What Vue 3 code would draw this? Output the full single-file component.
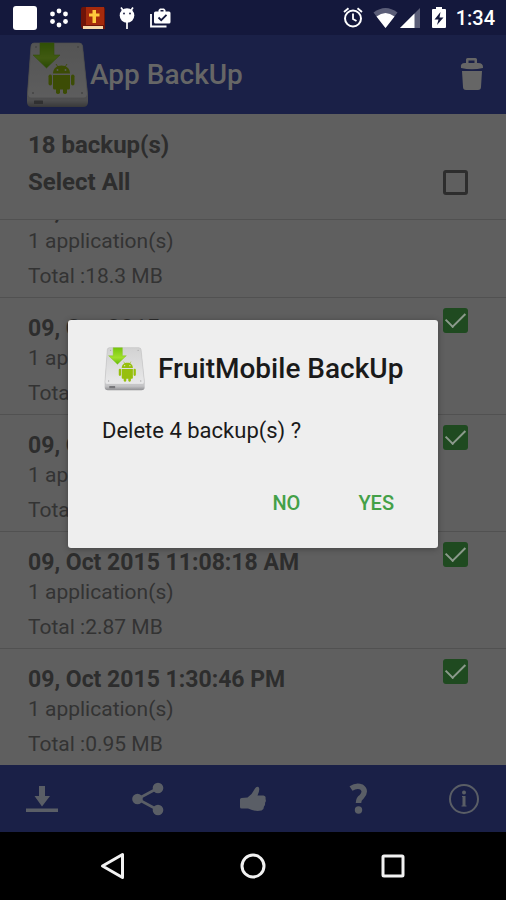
<script setup>
import { ref, computed } from 'vue'

const backups = ref([
  { id: 1, date: '09, Oct 2015', size: '18.3 MB', checked: true },
  { id: 2, date: '09, Oct 2015', size: '4.12 MB', checked: true },
  { id: 3, date: '09, Oct 2015', size: '3.05 MB', checked: true },
  { id: 4, date: '09, Oct 2015 11:08:18 AM', size: '2.87 MB', checked: true },
  { id: 5, date: '09, Oct 2015 1:30:46 PM', size: '0.95 MB', checked: true }
])
const selectAll = ref(false)
const total = 18
const selected = computed(() => backups.value.slice(1).filter((b) => b.checked).length)
</script>

<template>
  <div class="screen">
    <svg class="defs" width="0" height="0" aria-hidden="true">
      <defs>
        <linearGradient id="plate" x1="0" y1="0" x2="0" y2="1">
          <stop offset="0" stop-color="#d2d2d2" />
          <stop offset="1" stop-color="#e9e9ea" />
        </linearGradient>
        <linearGradient id="front" x1="0" y1="0" x2="0" y2="1">
          <stop offset="0" stop-color="#d5d5d6" />
          <stop offset="0.9" stop-color="#c4c4c6" />
          <stop offset="1" stop-color="#8d8d90" />
        </linearGradient>
        <linearGradient id="arrow" x1="0" y1="0" x2="0" y2="1">
          <stop offset="0" stop-color="#76c60c" />
          <stop offset="0.6" stop-color="#a1e02c" />
          <stop offset="1" stop-color="#63b808" />
        </linearGradient>
        <symbol id="drive" viewBox="0 0 64 66" preserveAspectRatio="none">
          <path d="M8 1H53Q56 1 56.500 4L62 54V60Q62 65 57 65H6Q1 65 1 60V55L5 4Q5.500 1 8 1Z" fill="url(#front)" />
          <path d="M8 1H53Q56 1 56.500 4L61.500 52Q61.500 56 58 56H5Q1.500 56 1.500 52L5 4Q5.500 1 8 1Z" fill="url(#plate)" stroke="#bcbcbc" stroke-width="0.700" />
          <g fill="#aaa"><circle cx="10" cy="5" r="1" /><circle cx="52" cy="5" r="1" /><circle cx="7" cy="51" r="1" /><circle cx="56" cy="51" r="1" /></g>
          <rect x="8" y="58.500" width="9" height="3.500" rx="0.500" fill="#77777a" />
          <path d="M14 1H28V13H34L20.500 26 7 13H14Z" fill="url(#arrow)" stroke="#7fc51c" stroke-width="0.600" />
          <g fill="#97bf0d">
            <path d="M27 31.500C27 26.500 30.500 23.500 35.500 23.500S44 26.500 44 31.500Z" />
            <path d="M27 33H44V46Q44 47.500 42.500 47.500H28.500Q27 47.500 27 46Z" />
            <rect x="22.500" y="32.500" width="3.500" height="11" rx="1.700" />
            <rect x="45" y="32.500" width="3.500" height="11" rx="1.700" />
            <rect x="30" y="44" width="4" height="8" rx="1.700" />
            <rect x="37" y="44" width="4" height="8" rx="1.700" />
            <path d="M30 22L32 25M41 22L39 25" stroke="#97bf0d" stroke-width="0.900" />
          </g>
          <g fill="#e6e6e6"><circle cx="31.500" cy="28" r="0.900" /><circle cx="39.500" cy="28" r="0.900" /></g>
        </symbol>
      </defs>
    </svg>

    <header class="status">
      <div class="notices">
        <span class="blank"></span>
        <svg width="20" height="20" viewBox="0 0 20 20" fill="#fff"><circle cx="10" cy="3" r="2.400" /><circle cx="16.500" cy="6" r="2.400" /><circle cx="16.500" cy="13.500" r="2.400" /><circle cx="10" cy="17" r="2.400" /><circle cx="3.500" cy="13.500" r="2.400" /><circle cx="3.500" cy="6" r="2.400" /></svg>
        <svg width="24" height="24" viewBox="0 0 24 24"><path d="M2 1H22Q24 1 24 3V23H2Q0 22 0 20V3Q0 1 2 1Z" fill="#6f1408" /><path d="M5 1H23V19H5Z" fill="#a52a0c" /><path d="M2 20H22V23H2Z" fill="#f6d7a8" /><path d="M11.500 4H15V7.500H18.500V10.500H15V17H11.500V10.500H8V7.500H11.500Z" fill="#ffc83d" /></svg>
        <svg width="20" height="22" viewBox="0 0 20 22" fill="#fff"><path d="M4 0.500L6.500 4M16 0.500L13.500 4M10 14V22" stroke="#fff" stroke-width="1.700" /><circle cx="10" cy="8.500" r="7.300" /><g fill="#14183c"><circle cx="7" cy="6.500" r="0.900" /><circle cx="13" cy="6.500" r="0.900" /></g></svg>
        <svg width="22" height="20" viewBox="0 0 22 20"><path d="M2 6V18.500H17.500" fill="none" stroke="#fff" stroke-width="1.800" /><path d="M6.500 3.500H9.500V2L11 0.500H15L16.500 2V3.500H20Q21.500 3.500 21.500 5V14Q21.500 15.500 20 15.500H6.500Q5 15.500 5 14V5Q5 3.500 6.500 3.500ZM11.500 3.500H14.500V2H11.500Z" fill="#fff" /><path d="M9.500 9.500L12.200 12.200 17.500 6.800" fill="none" stroke="#14183c" stroke-width="1.800" /></svg>
      </div>
      <div class="system">
        <svg width="20" height="21" viewBox="0 0 20 21" fill="none" stroke="#fff" stroke-width="2"><circle cx="10" cy="11.500" r="8" /><path d="M1 5L5.500 1.200M19 5L14.500 1.200M10 6.500V12L13.500 14" stroke-width="1.800" /></svg>
        <svg class="wifi" width="25" height="20" viewBox="0 0 25 20"><path d="M0.500 4.500Q12.500-4.500 24.500 4.500L12.500 20Z" fill="#5b5e78" /><path d="M3.500 8.500Q12.500 1.500 21.500 8.500L12.500 20Z" fill="#fff" /></svg>
        <svg class="signal" width="20" height="20" viewBox="0 0 20 20"><path d="M0 20L20 0V20Z" fill="#5b5e78" /><path d="M0 20L14.500 5.500V20Z" fill="#fff" /></svg>
        <svg class="battery" width="14" height="21" viewBox="0 0 14 21"><path d="M4 0H10V2H13Q14 2 14 3V20Q14 21 13 21H1Q0 21 0 20V3Q0 2 1 2H4Z" fill="#fff" /><path d="M8.500 5L2.500 12.500H6.500L5 18 11.500 10.500H7.500Z" fill="#14183c" /></svg>
        <span class="clock">1:34</span>
      </div>
    </header>

    <div class="appbar">
      <svg class="logo" width="64" height="66"><use href="#drive" /></svg>
      <h1>App BackUp</h1>
      <button class="trash" aria-label="Delete">
        <svg width="24" height="34" viewBox="0 0 24 34" fill="#666"><path d="M6 6V1.500Q6 0 7.500 0H15.500Q17 0 17 1.500V6H14.500V2.500H8.500V6Z" /><path d="M1 10Q0 5 5 5H18Q23.500 5 23 10Q12 12.500 1 10Z" /><path d="M2 13H22L21 29Q21 32 18 32H6Q3 32 3 29Z" /></svg>
      </button>
    </div>

    <section class="summary">
      <p>{{ total }} backup(s)</p>
      <label class="all">Select All<input v-model="selectAll" type="checkbox" class="box" /></label>
    </section>

    <ul class="list">
      <li v-for="b in backups" :key="b.id" class="row">
        <div class="info">
          <label :for="'b' + b.id" class="date">{{ b.date }}</label>
          <p class="apps">1 application(s)</p>
          <p class="size">Total :{{ b.size }}</p>
        </div>
        <input :id="'b' + b.id" v-model="b.checked" type="checkbox" class="box" />
      </li>
    </ul>

    <footer class="tools">
      <button aria-label="Save"><svg width="34" height="34" viewBox="0 0 34 34" fill="currentColor"><path d="M14 4H20V14H25L17 24.500 9.500 14H14ZM1 26.500H33V30H1Z" /></svg></button>
      <button aria-label="Share"><svg width="34" height="34" viewBox="0 0 34 34" fill="currentColor"><path d="M27 6L6.500 17 27 28" fill="none" stroke="currentColor" stroke-width="2.600" /><circle cx="27" cy="6" r="5.300" /><circle cx="6.500" cy="17" r="5.300" /><circle cx="27" cy="28" r="5.300" /></svg></button>
      <button aria-label="Like"><svg width="34" height="34" viewBox="0 0 34 34" fill="currentColor"><path d="M4 17.500Q4 16 5.500 16L11.500 15.500Q16.500 12 19 6.500Q20.500 3.800 22.500 5Q24.500 7 21.500 13.500H27.500Q30.300 14 29.500 17Q30.500 19 29 21Q29.500 23 28 24.500Q28 27.500 25.500 28.500Q19 30 12 26.500H5.500Q4 26.500 4 25Z" /></svg></button>
      <button aria-label="Help"><svg width="34" height="34" viewBox="0 0 34 34" fill="currentColor"><path d="M9 6.500Q14.500 3 19.500 5Q25 9 19.500 15Q16.500 17 16.500 21" fill="none" stroke="currentColor" stroke-width="5.500" /><circle cx="16.500" cy="28" r="3.700" /></svg></button>
      <button aria-label="About"><svg width="34" height="34" viewBox="0 0 34 34" fill="currentColor"><circle cx="17" cy="17" r="14" fill="none" stroke="currentColor" stroke-width="2" /><circle cx="17" cy="10.500" r="2" /><path d="M15 14H18.500V23.500H19.500V24.500H14.500V23.500H15.500V15H15Z" /></svg></button>
    </footer>

    <nav class="nav">
      <button aria-label="Back"><svg width="28" height="28" viewBox="0 0 28 28"><path d="M23.500 2.500V25.500L3.500 14Z" /></svg></button>
      <button aria-label="Home"><svg width="28" height="28" viewBox="0 0 28 28"><circle cx="14" cy="14" r="11" /></svg></button>
      <button aria-label="Recent apps"><svg width="28" height="28" viewBox="0 0 28 28"><rect x="4" y="4" width="20" height="20" rx="1" /></svg></button>
    </nav>

    <div class="overlay">
      <div class="dialog" role="dialog" aria-labelledby="dialog-title">
        <div class="heading">
          <svg width="42" height="44"><use href="#drive" /></svg>
          <h2 id="dialog-title">FruitMobile BackUp</h2>
        </div>
        <p class="message">Delete {{ selected }} backup(s) ?</p>
        <div class="actions">
          <button>NO</button>
          <button>YES</button>
        </div>
      </div>
    </div>
  </div>
</template>

<style>
body {
  margin: 0;
  background: #000;
}
</style>

<style scoped>
* {
  box-sizing: border-box;
}
.screen {
  position: relative;
  display: flex;
  flex-direction: column;
  height: 100vh;
  font-family: Roboto, sans-serif;
  background: #5f5f5f;
  color: #2d2d2d;
}
.defs {
  position: absolute;
}
h1,
h2,
p,
ul {
  margin: 0;
  padding: 0;
}
button {
  border: 0;
  padding: 0;
  background: none;
  font: inherit;
  color: inherit;
}
svg {
  display: block;
  flex: none;
}
.status {
  display: flex;
  justify-content: space-between;
  align-items: center;
  height: 35px;
  padding: 0 11px 0 13px;
  background: #14183c;
  color: #fff;
}
.notices,
.system {
  display: flex;
  align-items: center;
}
.notices {
  gap: 12px;
}
.blank {
  width: 24px;
  height: 24px;
  border-radius: 3px;
  background: #fff;
}
.wifi {
  margin-left: 10px;
}
.signal {
  margin-left: 2px;
}
.battery {
  margin: 0 10px 0 12px;
}
.clock {
  font-size: 20px;
  font-weight: 500;
  line-height: 24px;
}
.appbar {
  display: flex;
  align-items: center;
  height: 79px;
  padding: 0 22px 0 26px;
  background: #1a2047;
}
.logo {
  filter: brightness(0.4);
}
h1 {
  flex: 1;
  font-size: 28px;
  line-height: 36px;
  font-weight: 500;
  color: #666;
}
.summary {
  padding: 13px 38px 18px 28px;
  border-bottom: 1px solid #515151;
  font-size: 24px;
  line-height: 37px;
  font-weight: 700;
}
.all {
  display: flex;
  justify-content: space-between;
  align-items: center;
}
.box {
  appearance: none;
  display: grid;
  place-items: center;
  flex: none;
  width: 25px;
  height: 25px;
  margin: 0;
  border: 3px solid #2d2d2d;
  border-radius: 3px;
}
.box:checked {
  border: 0;
  background: #1f4a20;
}
.box:checked::before {
  content: '';
  width: 9px;
  height: 17px;
  margin-bottom: 6px;
  border: solid #8c9a8c;
  border-width: 0 2px 2px 0;
  transform: rotate(45deg);
}
.list {
  display: flex;
  flex-direction: column;
  justify-content: flex-end;
  flex: 1;
  min-height: 0;
  overflow: hidden;
  list-style: none;
}
.row {
  display: flex;
  justify-content: space-between;
  align-items: flex-start;
  flex: none;
  padding: 10px 38px 5px 28px;
  border-top: 1px solid #515151;
  font-size: 21px;
  color: #333;
}
.date {
  display: block;
  padding-top: 5px;
  font-size: 23px;
  font-weight: 700;
  line-height: 32px;
  color: #2d2d2d;
}
.apps {
  line-height: 26px;
}
.size {
  padding-top: 6px;
  line-height: 32px;
}
.tools {
  display: flex;
  justify-content: space-between;
  align-items: center;
  height: 67px;
  padding: 0 25px;
  background: #1a2047;
  color: #5a5e66;
}
.nav {
  display: flex;
  justify-content: center;
  align-items: center;
  gap: 112px;
  height: 68px;
  background: #000;
}
.nav svg {
  fill: none;
  stroke: #f2f2f2;
  stroke-width: 3;
  stroke-linejoin: round;
}
.overlay {
  position: absolute;
  inset: 0;
  display: flex;
  justify-content: center;
  align-items: center;
  padding: 35px 68px 68px;
}
.dialog {
  width: 100%;
  padding: 27px 30px 21px 34px;
  border-radius: 3px;
  background: #eee;
  color: #1a1a1a;
  box-shadow: 0 1px 6px rgba(0, 0, 0, 0.3);
}
.heading {
  display: flex;
  align-items: center;
  gap: 12px;
  padding-left: 2px;
}
h2 {
  font-size: 28px;
  line-height: 44px;
  font-weight: 500;
  white-space: nowrap;
}
.message {
  padding: 24px 0 32px;
  font-size: 22px;
  line-height: 32px;
}
.actions {
  display: flex;
  justify-content: flex-end;
  gap: 30px;
  font-size: 20px;
  line-height: 48px;
  font-weight: 500;
  color: #43a047;
}
.actions button {
  padding: 0 14px;
}
</style>
